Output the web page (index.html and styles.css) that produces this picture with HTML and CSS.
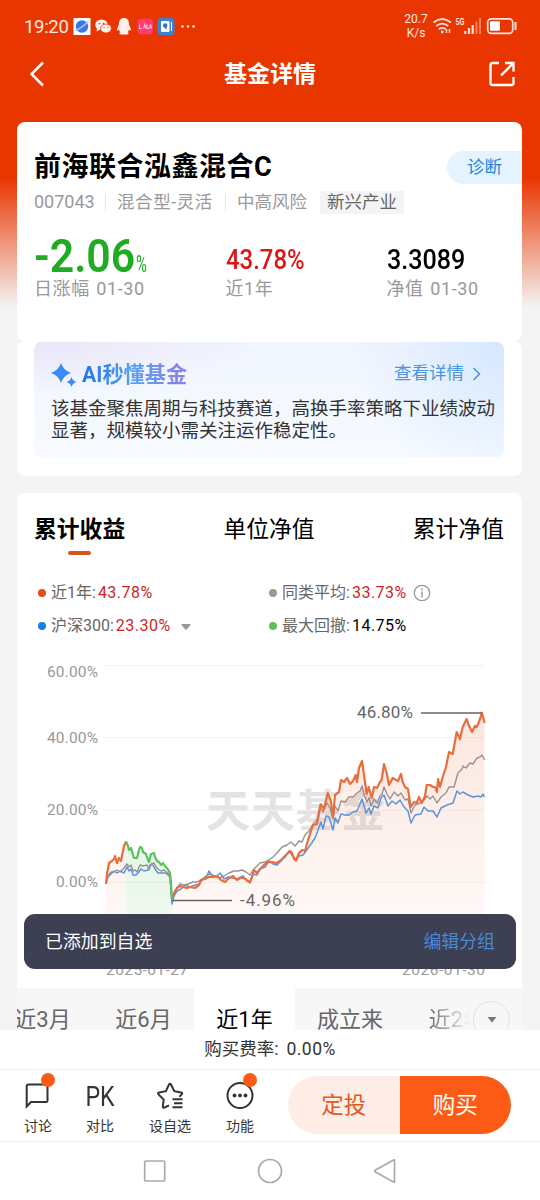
FILE: index.html
```html
<!DOCTYPE html>
<html lang="zh-CN">
<head>
    <meta charset="UTF-8">
    <title>基金详情</title>
    <link rel="stylesheet" href="styles.css">
</head>
<body>
<div class="page">
    <div class="status">
        <span class="time">19:20</span>
        <svg class="apps" width="126" height="20" viewBox="73 17 126 20">
            <rect x="73.500" y="18" width="17" height="17" fill="#fff"/>
            <circle cx="82" cy="26.500" r="6.200" fill="#3c78e0"/>
            <path d="M75.500 30.500Q82 28 88.500 21" stroke="#a9c9ff" stroke-width="1.300" fill="none"/>
            <ellipse cx="101.500" cy="24.800" rx="6.300" ry="5.300" fill="#fff0ea"/>
            <path d="M97 28l-.5 3.500 4-2z" fill="#fff0ea"/>
            <ellipse cx="106" cy="28.500" rx="5.400" ry="4.500" fill="#fff0ea" stroke="#e93600" stroke-width=".8"/>
            <g fill="#e93600"><circle cx="99.500" cy="23.500" r=".8"/><circle cx="103.500" cy="23.500" r=".8"/><circle cx="104" cy="27.500" r=".6"/><circle cx="107.800" cy="27.500" r=".6"/></g>
            <path d="M124 18c3.600 0 5 2.600 5 6 0 1 2 4 1.900 6-.2 1.300-1.300.2-1.900-.6-.2 1.600-1 2.300-1.600 2.900 1 .4 1.400 1 1.100 1.700-1.300.8-7.700.8-9 0-.3-.7.100-1.300 1.100-1.700-.7-.6-1.400-1.300-1.600-2.900-.6.800-1.700 1.900-1.900.6-.1-2 1.900-5 1.900-6 0-3.400 1.400-6 5-6z" fill="#fff0ea"/>
            <rect x="137.500" y="18.700" width="15.500" height="15.500" rx="3.500" fill="#ff3c70"/>
            <path d="M139.500 24.500v4h2.500M143.500 28.500l1.300-4 1.300 4M147 24.500v4h2M149.500 28.500l1-4 1 4" stroke="#ffc4d4" fill="none" stroke-width="1.100"/>
            <rect x="157.500" y="18" width="17" height="17" rx="3.500" fill="#3d82d2"/>
            <rect x="161" y="21" width="8.500" height="11" rx="1.300" fill="#fff"/>
            <path d="M171.500 22v9" stroke="#fff"/>
            <circle cx="165.200" cy="25.500" r="2.200" fill="#2f73c4"/><path d="M164 27h2.500v3z" fill="#2f73c4"/>
            <g fill="#ffe3da"><circle cx="182.500" cy="26.500" r="1.300"/><circle cx="188" cy="26.500" r="1.300"/><circle cx="193.500" cy="26.500" r="1.300"/></g>
        </svg>
        <span class="speed">20.7<br>K/s</span>
        <svg class="signal" width="86" height="22" viewBox="432 16 86 22" fill="none" stroke="#ffe3da">
            <path d="M433.500 22.500q8.700-7 17.400 0M436.200 26q6-4.800 12 0M438.800 29.200q3.400-2.600 6.800 0" stroke-width="1.700"/>
            <circle cx="442.200" cy="32" r="1.400" fill="#ffe3da" stroke="none"/>
            <path d="M446.500 29v4M449.500 29v4" stroke-width="1.500"/>
            <text x="455.500" y="25" class="net" textLength="9" lengthAdjust="spacingAndGlyphs">5G</text>
            <path d="M465.300 31v3M469 28v6M472.700 25v9" stroke-width="2.200"/>
            <path d="M476.500 21.500v12.500M480 18v16" stroke-width="2" stroke="#f5825f"/>
            <rect x="487.700" y="18.800" width="25" height="14.500" rx="3.500" stroke-width="1.700"/>
            <rect x="490" y="21.300" width="10" height="9.500" rx="1" fill="#fff" stroke="none"/>
            <path d="M515.500 22v8" stroke-width="2"/>
        </svg>
    </div>
    <div class="header">
        <svg width="16" height="26" viewBox="0 0 16 26"><path d="M14 1.500L2.500 13 14 24.500" fill="none" stroke="#fff" stroke-width="2.500"/></svg>
        <h1>基金详情</h1>
        <svg width="26" height="26" viewBox="0 0 26 26" fill="none" stroke="#fff" stroke-width="2.300">
            <path d="M10 2H3.500Q1.500 2 1.500 4v18q0 2 2 2h19q2 0 2-2v-6"/>
            <path d="M12 14.500L23.500 3M16 2h8.500v8.500"/>
        </svg>
    </div>

    <div class="card fund">
        <div class="fund_top">
            <h2>前海联合泓鑫混合C</h2>
            <span class="diagnose">诊断</span>
        </div>
        <div class="meta">
            <span class="code">007043</span>
            <span class="sep"></span>
            <span class="type">混合型-灵活</span>
            <span class="sep"></span>
            <span>中高风险</span>
            <span class="tag">新兴产业</span>
        </div>
        <div class="stats">
            <div class="stat">
                <div class="value big"><b>-2.06</b><small>%</small></div>
                <div class="name">日涨幅 01-30</div>
            </div>
            <div class="stat">
                <div class="value red"><b>43.78%</b></div>
                <div class="name">近1年</div>
            </div>
            <div class="stat">
                <div class="value nav_value"><b>3.3089</b></div>
                <div class="name">净值 01-30</div>
            </div>
        </div>
    </div>

    <div class="card ai">
        <div class="ai_box">
            <div class="ai_head">
                <svg width="26" height="26" viewBox="0 0 26 26" fill="#3a8cf5">
                    <path d="M10 1Q12.500 8.500 20 11 12.500 13.500 10 21 7.500 13.500 0 11 7.500 8.500 10 1z"/>
                    <path d="M20.500 15q1.200 3.800 5 5-3.800 1.200-5 5-1.200-3.800-5-5 3.800-1.200 5-5z"/>
                </svg>
                <span class="ai_title">AI秒懂基金</span>
                <span class="more">查看详情</span>
                <svg width="10" height="14" viewBox="0 0 10 14"><path d="M1.500 1l6 6-6 6" fill="none" stroke="#4a94dd" stroke-width="1.500"/></svg>
            </div>
            <p>该基金聚焦周期与科技赛道，高换手率策略下业绩波动显著，规模较小需关注运作稳定性。</p>
        </div>
    </div>

    <div class="card trend">
        <div class="tabs">
            <span class="tab active">累计收益</span>
            <span class="tab">单位净值</span>
            <span class="tab">累计净值</span>
        </div>
        <div class="legend">
            <div class="item"><i class="dot orange"></i><span>近1年:<em>43.78%</em></span></div>
            <div class="item"><i class="dot gray"></i><span>同类平均:<em>33.73%</em></span>
                <svg class="info" width="18" height="18" viewBox="0 0 18 18" fill="none" stroke="#999"><circle cx="9" cy="9" r="7.700" stroke-width="1.300"/><path d="M9 7.500v6M9 4.500v1.700" stroke-width="1.500"/></svg>
            </div>
            <div class="item"><i class="dot blue"></i><span>沪深300:<em>23.30%</em></span>
                <svg class="caret" width="10" height="6" viewBox="0 0 10 6"><path d="M1 0h8q1 0 .5 1L5.700 5.500q-.7.700-1.400 0L.5 1Q0 0 1 0z" fill="#999"/></svg>
            </div>
            <div class="item"><i class="dot green"></i><span>最大回撤:<em class="black">14.75%</em></span></div>
        </div>
        <svg class="chart" width="505" height="346" viewBox="17 642 505 346">
            <defs>
                <linearGradient id="orangeFill" gradientUnits="userSpaceOnUse" x1="0" y1="710" x2="0" y2="955">
                    <stop offset="0" stop-color="#ea6a38" stop-opacity=".17"/>
                    <stop offset="1" stop-color="#ea6a38" stop-opacity=".02"/>
                </linearGradient>
                <linearGradient id="greenFill" x1="0" y1="0" x2="0" y2="1">
                    <stop offset="0" stop-color="#5cc05c" stop-opacity=".16"/>
                    <stop offset="1" stop-color="#5cc05c" stop-opacity=".06"/>
                </linearGradient>
            </defs>
            <text class="mark" x="206" y="827" textLength="179">天天基金</text>
            <path class="grid" d="M106 665.500h379M106 737.500h379M106 810h379M106 882.500h379M106 955h379"/>
            <g id="areas"></g>
            <g class="axis">
                <text x="98" y="677" text-anchor="end" textLength="51">60.00%</text>
                <text x="98" y="743" text-anchor="end" textLength="51">40.00%</text>
                <text x="98" y="815" text-anchor="end" textLength="51">20.00%</text>
                <text x="98" y="887" text-anchor="end" textLength="42">0.00%</text>
                <text x="98" y="960" text-anchor="end" textLength="58">-20.00%</text>
                <text x="106" y="975" textLength="82">2025-01-27</text>
                <text x="485" y="975" text-anchor="end" textLength="83">2026-01-30</text>
            </g>
            <g id="lines" fill="none" stroke-linejoin="round"></g>
            <path d="M421 713h61M172 900.500h60" stroke="#666" stroke-width="1.700"/>
            <g class="peak">
                <text x="357" y="718" textLength="56">46.80%</text>
                <text x="240" y="905.500" textLength="55">-4.96%</text>
            </g>
        </svg>
        <div class="periods">
            <span>近3月</span>
            <span>近6月</span>
            <span class="current">近1年</span>
            <span class="since">成立来</span>
            <span class="fade">近2年</span>
            <b class="open"><svg width="10" height="6" viewBox="0 0 10 6"><path d="M.5 0h9L5 5.500z" fill="#777"/></svg></b>
        </div>
    </div>
</div>

<div class="fee">购买费率:<span>0.00%</span></div>

<div class="actions">
    <div class="action">
        <svg width="30" height="30" viewBox="0 0 30 30"><path d="M5 4.500h18q1.500 0 1.500 1.500v14.500q0 1.500-1.500 1.500H8l-4.300 4.500V6q0-1.500 1.300-1.500z"/></svg>
        <span>讨论</span><i class="badge"></i>
    </div>
    <div class="action"><b>PK</b><span>对比</span></div>
    <div class="action wide">
        <svg width="30" height="30" viewBox="0 0 30 30">
            <path d="M14 25.300l-4.500 2.200q-1.900.8-1.700-1.100l.9-6.800-5.200-5.200q-1.200-1.500.6-1.900l6.800-1.300L14 4.600q1-1.600 2 0l3.300 6.600 6.800 1.300q1.900.4.600 1.900l-2.300 2.300"/>
            <path d="M17.500 19.300h10M19 23.300h8.500M17.500 27.300h10"/>
        </svg>
        <span>设自选</span>
    </div>
    <div class="action">
        <svg width="30" height="30" viewBox="0 0 30 30"><circle cx="15" cy="15.500" r="12.500"/><g fill="#333" stroke="none"><circle cx="9.500" cy="15.500" r="1.900"/><circle cx="15" cy="15.500" r="1.900"/><circle cx="20.500" cy="15.500" r="1.900"/></g></svg>
        <span>功能</span><i class="badge"></i>
    </div>
    <div class="buttons">
        <div class="plan">定投</div>
        <div class="buy">购买</div>
    </div>
</div>

<div class="navbar">
    <svg width="24" height="26" viewBox="0 0 24 26"><rect x="1.700" y="3" width="20" height="20" rx="1"/></svg>
    <svg width="26" height="26" viewBox="0 0 26 26"><circle cx="13" cy="13" r="11.500"/></svg>
    <svg width="24" height="26" viewBox="0 0 24 26"><path d="M21.500 2.500v21q0 1-1 .5L2.500 14q-1.300-1 0-2L20.500 2q1-.5 1 .5z"/></svg>
</div>

<div class="toast"><span>已添加到自选</span><span class="edit">编辑分组</span></div>

<script>
    const up1 = "106,884 107,874 109,863 112,861 114,859 115,856 117,863 119,858 121,861 123,851 124,846 126,841.5";
    const down = "126,841.5 128,846 129,850 131,848 133,855 134,858 137,858 139,850 140,847 142,848 143,852 146,854 148,860 149,862 151,854 154,853 155,857 157,861 159,862 161,865 163,863 165,866 167,868 169,871 170,873 171,883 172,900";
    const up2 = "172,900 174,893 177,888 180,886 183,887 187,888 190,887 195,888 199,885 201,880 205,879 209,877 213,877 217,876 221,880 225,882 229,878 233,876 237,880 240,878 244,878 248,881 250,882 252,877 254,870 257,873 260,869 264,865 268,862 272,862 276,863 280,861 284,857 288,853 290,851 292,853 294,859 296,860.5 299,853 302,850 305,851 308,840 310.7,832 313,825 317,824 320.7,804 324,809 327.7,793 330.7,800 333,817 335,795 339,792 341,780 344,782 347,778 350,784 353,781 355.7,775 357,782 359,768 362,761 364,775 366.7,794 368.7,787 371.7,798 374,787 377,788 380,782 381.7,780 384,764 386.7,773 389,785 392.7,778 396,780 398,781 401,774 402.7,782 405,787 408,789 410.7,807 414,802 416.7,803 419,797 421.7,803 425,796 426.7,785 430,785 433,787 435,787 437,792 438,779 440,787 442.7,777 446,767 449,752 452.7,754 456.7,732 460,739 462.7,727 466.7,719 468.7,725 472,732 475,726 476.7,727 479,722 482,712.7 484.5,723";
    const average = "106,883 108,876 111,872 114,872 117,870 120,872 124,868 127,864 129,867 131,865 133,871 135,870 137,872 140,865 143,866 147,865 149,870 151,864 154,863 156,867 158,869 161,871 164,870 168,873 170,878 172,900 175,891 180,884 184,885 188,884 193,882 197,882 202,879 206,876 210,874 215,876 219,878 224,876 229,873 234,871 238,871 242,870 246,872 250,875 253,870 256,867 260,863 265,862 269,860 273,857 277,853 282,847 287,845 291,842 295,846 299,841 302,842 305,835 309,831 313,824 317,820 320,806 323,812 327,803 330,808 333,819 335,806 338,811 341,801 345,802 349,797 353,797 357,793 360,791 362,786 364,795 367,802 369,798 371,806 374,799 377,803 380,796 382,794 384,787 387,794 390,799 394,792 398,796 401,793 405,800 408,799 411,813 415,805 420,803 424,800 427,796 430,799 433,796 437,803 441,797 446,793 449,787 454,787 458,773 462,769 463,766 466,768 470,763 473,764 477,758 480,757 482,755 484.500,760";
    const index300 = "106,883 108,877 111,874 114,871 117,873 120,871 124,873 127,867 129,871 131,869 133,875 136,875 138,873 141,869 144,871 148,870 150,865 153,865 155,869 158,873 162,873 166,873 170,877 172,904 174,896 177,891 181,889 185,885 190,887 195,885 199,884 202,880 206,878 209,871 212,876 216,877 220,873 224,879 228,877 232,878 237,879 243,876 247,881 250,883 253,874 257,875 260,869 265,867 269,861 273,864 277,865 281,861 285,857 289,851 292,855 296,860 299,856 303,855 306,851 311,844 315,838 318,830 321,822 323,829 326,816 329,817 333,830 335,818 338,823 341,814 345,815 349,815 353,812 357,811 360,804 362,799 366,813 369,808 371,814 374,806 378,808 381,798 384,795 388,806 392,801 396,804 400,800 404,807 408,811 411,823 415,815 421,814 424,807 428,811 433,811 437,817 441,808 447,805 453,803 457,791 460,794 463,792 468,795 473,797 478,796 481,797 483,794 484.500,797";

    function addShape(parentId, tag, points, attrs) {
        const shape = document.createElementNS("http://www.w3.org/2000/svg", tag);
        shape.setAttribute("points", points);
        for (const key in attrs) {
            shape.setAttribute(key, attrs[key]);
        }
        document.getElementById(parentId).appendChild(shape);
    }

    addShape("areas", "polygon", "106,955 " + up1 + " 126,955", {fill: "url(#orangeFill)"});
    addShape("areas", "polygon", "126,955 " + down + " 172,955", {fill: "url(#greenFill)"});
    addShape("areas", "polygon", "172,955 " + up2 + " 484.5,955", {fill: "url(#orangeFill)"});
    addShape("lines", "polyline", index300, {stroke: "#5b93dc", "stroke-width": 1.5});
    addShape("lines", "polyline", average, {stroke: "#999290", "stroke-width": 1.4});
    addShape("lines", "polyline", up1, {stroke: "#eb6d3c", "stroke-width": 2.2});
    addShape("lines", "polyline", up2, {stroke: "#eb6d3c", "stroke-width": 2.2});
    addShape("lines", "polyline", down, {stroke: "#5cc05c", "stroke-width": 2.2});
</script>
</body>
</html>
```
FILE: styles.css
```css
body {
    margin: 0;
    width: 540px;
    height: 1200px;
    display: flex;
    flex-direction: column;
    position: relative;
    overflow: hidden;
    background: #fff;
    color: #333;
    font-family: Roboto, "Noto Sans CJK SC", sans-serif;
}

h1, h2, p {
    margin: 0;
}

svg {
    display: block;
    flex-shrink: 0;
}

.page {
    height: 1030px;
    overflow: hidden;
    background: linear-gradient(#e93600 0, #e93600 178px, #f4f4f4 308px);
}

/* status bar and title */
.status {
    height: 50px;
    padding: 3px 22px 0 24px;
    display: flex;
    align-items: center;
    color: #ffe9e2;
    box-sizing: border-box;
}

.time {
    width: 49px;
    font-size: 18.500px;
    letter-spacing: -0.300px;
}

.speed {
    width: 28px;
    margin: 0 2px 0 auto;
    font-size: 12px;
    line-height: 13.500px;
    text-align: center;
}

.net {
    font-size: 9.500px;
    font-weight: bold;
    fill: #ffe3da;
    stroke: none;
}

.header {
    height: 72px;
    padding: 0 25px 24px 29px;
    box-sizing: border-box;
    display: flex;
    align-items: center;
    justify-content: space-between;
}

.header h1 {
    color: #fff;
    font-size: 23px;
    line-height: 48px;
    padding: 1px 0 0 6px;
}

.card {
    width: 505px;
    margin-left: 17px;
    background: #fff;
    border-radius: 8px;
    overflow: hidden;
    box-sizing: border-box;
}

/* fund summary */
.fund {
    height: 219px;
    padding: 25px 0 0 17px;
}

.fund_top {
    display: flex;
    justify-content: space-between;
    align-items: center;
    height: 40px;
}

.fund h2 {
    color: #000;
    font-size: 27px;
    letter-spacing: 0.500px;
    line-height: 40px;
}

.diagnose {
    width: 75px;
    height: 33px;
    border-radius: 17px 0 0 17px;
    background: #e5f3ff;
    color: #1c86dc;
    font-size: 17.500px;
    line-height: 33px;
    text-align: center;
}

.meta {
    display: flex;
    align-items: center;
    height: 24px;
    margin-top: 3px;
    color: #999;
    font-size: 17.500px;
    line-height: 22px;
    white-space: nowrap;
}

.code {
    font-size: 18px;
    width: 60px;
}

.type {
    width: 97px;
    letter-spacing: 0.600px;
}

.sep {
    width: 1px;
    height: 17px;
    margin: 0 11px;
    background: #e6e6e6;
}

.tag {
    margin-left: 13px;
    padding: 0 7px;
    line-height: 23px;
    background: #f4f4f4;
    color: #666;
}

.stats {
    display: flex;
    margin-top: 20px;
}

.stat {
    width: 191.500px;
    flex-shrink: 0;
}

.stat:nth-child(2) {
    width: 161px;
}

.value {
    height: 42px;
    line-height: 52px;
    font-size: 28.500px;
    color: #000;
    white-space: nowrap;
}

.value b {
    display: inline-block;
    font-weight: 500;
    transform: scaleX(0.840);
    transform-origin: left;
}

.value.nav_value b {
    transform: scaleX(0.880);
}

.value.red {
    color: #dd1717;
}

.value.big {
    color: #1fab22;
    display: flex;
    font-size: 46px;
    line-height: 44px;
}

.value.big b {
    width: 102px;
    font-weight: 600;
    transform: scaleX(0.930);
}

.value.big small {
    font-size: 24px;
    line-height: 24px;
    height: 24px;
    margin-top: 18px;
    transform: scaleX(0.620);
    transform-origin: left;
}

.name {
    color: #999;
    font-size: 18px;
    line-height: 26px;
    letter-spacing: 0.600px;
    word-spacing: 1.500px;
}

/* ai summary */
.ai {
    height: 135px;
    padding: 1px 18px 0 17px;
    margin-bottom: 17px;
}

.ai_box {
    height: 115px;
    padding: 19px 0 0 17px;
    box-sizing: border-box;
    border-radius: 7px;
    background: radial-gradient(circle at 100% 0, #d6e8ff 0, rgba(214, 232, 255, 0) 150px), radial-gradient(ellipse at 0 0, #e9e6f8 0, rgba(233, 230, 248, 0) 220px), linear-gradient(#f1f5fe, #f7fbff);
}

.ai_head {
    display: flex;
    align-items: center;
    height: 28px;
}

.ai_title {
    margin-left: 5px;
    font-size: 21.200px;
    font-weight: bold;
    line-height: 28px;
    background: linear-gradient(90deg, #1d76ea, #5aa0ef 50%, #8c7fe6);
    -webkit-background-clip: text;
    color: transparent;
}

.more {
    margin: -7px 8px 0 auto;
    color: #4a94dd;
    font-size: 17.500px;
}

.ai_head svg:last-child {
    margin: -3px 22px 0 0;
}

.ai_box p {
    width: 450px;
    margin-top: 9px;
    font-size: 18.500px;
    line-height: 22px;
}

/* trend */
.trend {
    height: 560px;
}

.tabs {
    height: 83px;
    padding: 21px 18px 0 17px;
    box-sizing: border-box;
    display: flex;
    justify-content: space-between;
    color: #000;
    font-size: 22.800px;
    line-height: 32px;
}

.tab.active {
    font-weight: bold;
}

.tab.active::after {
    content: "";
    display: block;
    width: 23px;
    height: 4px;
    margin: 5px auto 0;
    border-radius: 2px;
    background: #da5420;
}

.legend {
    display: grid;
    grid-template-columns: 231px 1fr;
    grid-auto-rows: 33px;
    padding-left: 21px;
}

.item {
    display: flex;
    align-items: center;
    color: #666;
    font-size: 16px;
}

.item span {
    line-height: 20px;
}

.item em {
    font-style: normal;
    color: #cc1f1f;
    margin-left: 2px;
    letter-spacing: 0.500px;
}

.item em.black {
    color: #000;
}

.dot {
    width: 8px;
    height: 8px;
    margin-right: 5px;
    border-radius: 50%;
}

.orange {
    background: #e44d16;
}

.gray {
    background: #999;
}

.blue {
    background: #1380e8;
}

.green {
    background: #5cc05c;
}

.info {
    margin-left: 6px;
}

.caret {
    margin: 2px 0 0 10px;
}

.grid {
    stroke: #f3f3f3;
    fill: none;
}

.axis {
    font-size: 15.500px;
    fill: #999;
}

.peak {
    font-size: 17px;
    fill: #666;
}

.mark {
    font-size: 44px;
    font-weight: 700;
    fill: #e3e3e3;
}

.periods {
    display: flex;
    position: relative;
    height: 42px;
    margin-left: -25px;
    color: #666;
    background: #f7f7f7;
    font-size: 22px;
    line-height: 64px;
}

.periods span {
    width: 101px;
    flex-shrink: 0;
    height: 42px;
    text-align: center;
}

.periods span.current {
    background: #fff;
    color: #000;
}

.periods span.since {
    width: 110px;
}

.periods .fade {
    width: 112px;
    text-indent: -8px;
    background: linear-gradient(90deg, #666 20%, #f7f7f7 58%);
    -webkit-background-clip: text;
    color: transparent;
}

.open {
    position: absolute;
    right: 12px;
    top: 13px;
    width: 37px;
    height: 37px;
    box-sizing: border-box;
    border: 1px solid #e3e3e3;
    border-radius: 50%;
    background: #f7f7f7;
    display: flex;
    align-items: center;
    justify-content: center;
}

/* bottom area */
.fee {
    height: 40px;
    box-sizing: border-box;
    border-bottom: 1px solid #f0f0f0;
    font-size: 17.500px;
    line-height: 38px;
    text-align: center;
}

.fee span {
    margin-left: 8px;
    letter-spacing: 0.500px;
}

.actions {
    height: 72px;
    box-sizing: border-box;
    padding: 6px 0 0 7px;
    border-bottom: 1px solid #f0f0f0;
    display: flex;
}

.action {
    position: relative;
    width: 62px;
    display: flex;
    flex-direction: column;
    align-items: center;
    padding-top: 4px;
    box-sizing: border-box;
    font-size: 14px;
    line-height: 18px;
}

.action.wide {
    width: 78px;
}

.action svg {
    fill: none;
    stroke: #333;
    stroke-width: 2px;
}

.action b {
    height: 30px;
    font-size: 27px;
    font-weight: normal;
    line-height: 34px;
    transform: scaleX(0.860);
}

.action span {
    margin-top: 7px;
}

.badge {
    position: absolute;
    right: 14px;
    top: -3px;
    width: 14px;
    height: 14px;
    border-radius: 50%;
    background: #fb5b14;
}

.buttons {
    display: flex;
    width: 223px;
    height: 58px;
    margin-left: 17px;
    border-radius: 29px;
    overflow: hidden;
    font-size: 22.500px;
    line-height: 58px;
    text-align: center;
}

.plan {
    width: 111.500px;
    background: #fdede6;
    color: #e05a22;
}

.buy {
    width: 111.500px;
    background: #fb5b14;
    color: #fff;
}

.navbar {
    height: 58px;
    display: flex;
    justify-content: center;
    align-items: center;
    gap: 90px;
}

.navbar svg {
    fill: none;
    stroke: #aaa;
    stroke-width: 1.700px;
}

.toast {
    position: absolute;
    left: 24px;
    top: 914px;
    width: 492px;
    height: 55px;
    padding: 0 21px 3px 21px;
    box-sizing: border-box;
    border-radius: 11px;
    background: rgba(55, 57, 77, 0.970);
    color: #fff;
    display: flex;
    justify-content: space-between;
    align-items: center;
    font-size: 17.900px;
}

.toast .edit {
    color: #4a88d4;
}
```
